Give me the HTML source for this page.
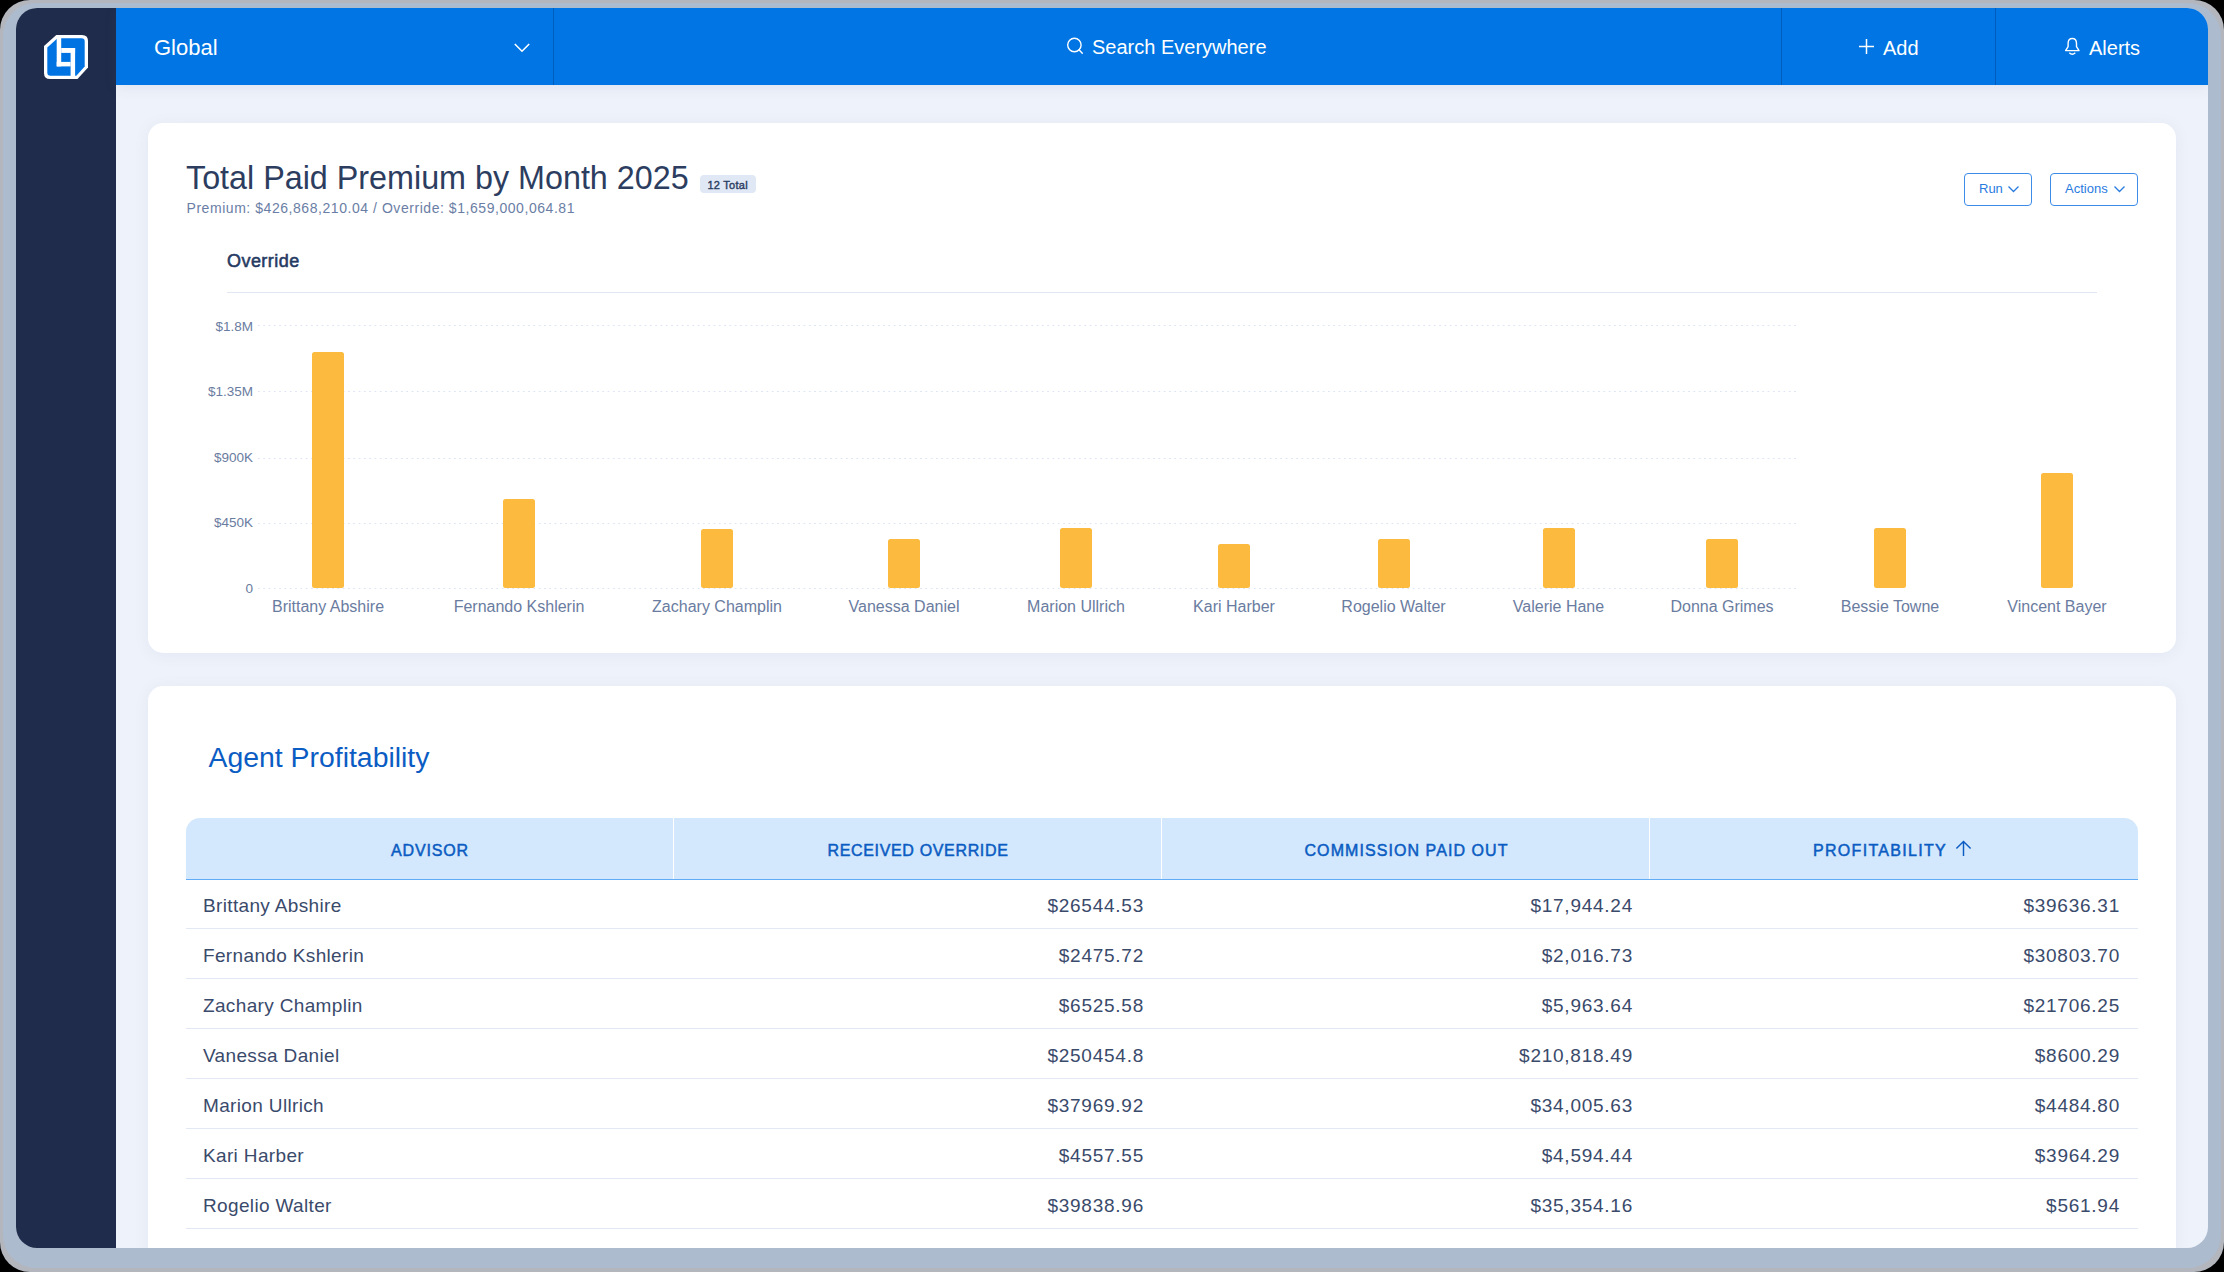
<!DOCTYPE html>
<html><head><meta charset="utf-8">
<style>
*{box-sizing:border-box;margin:0;padding:0}
html,body{width:2224px;height:1272px;overflow:hidden;background:#000}
body{position:relative;font-family:"Liberation Sans",sans-serif;color:#2f3e5c}
.abs{position:absolute}
#noise{position:absolute;left:0;top:0;width:2224px;height:1272px;border-radius:30px;background:#b3b6bd}
#frame{position:absolute;left:3px;top:3px;width:2218px;height:1264.5px;border-radius:33px;background:#adbbcf}
#screen{position:absolute;left:16px;top:8px;width:2192px;height:1240px;border-radius:21px;overflow:hidden;background:#eef2fa}
#pg{position:absolute;left:-16px;top:-8px;width:2224px;height:1272px}
#side{position:absolute;left:16px;top:8px;width:100px;height:1240px;background:#1f2c4b}
#head{position:absolute;left:116px;top:8px;width:2092px;height:77px;background:#0075e3;box-shadow:0 3px 12px rgba(90,120,170,.10)}
.sep{position:absolute;top:8px;width:1px;height:77px;background:#005cbd}
.ht{position:absolute;color:#fff;font-size:20px;line-height:20px;white-space:nowrap}
.card{position:absolute;background:#fff;border-radius:15px;box-shadow:0 2px 14px rgba(120,140,180,.10)}
.t{position:absolute;white-space:nowrap}
.grid{position:absolute;left:258px;width:1539px;height:1px;background-image:linear-gradient(90deg,#dce5f4 0,#dce5f4 2.1px,transparent 2.1px);background-size:5.3px 1px}
.yl{position:absolute;left:153px;width:100px;text-align:right;font-size:13.5px;line-height:13.5px;color:#6a7ca0;white-space:nowrap}
.bar{position:absolute;width:32px;background:#fcbb3f;border-radius:2.5px}
.xl{position:absolute;top:599.2px;width:200px;text-align:center;font-size:16px;line-height:16px;color:#6a7ca0;white-space:nowrap}
.btn{position:absolute;top:173px;height:33px;border:1.2px solid #3c8ce8;border-radius:4px;background:#fff}
.bt{position:absolute;top:181.5px;font-size:13px;line-height:13px;color:#2a7be0;white-space:nowrap}
.th{position:absolute;top:818px;height:61.5px;background:#d3e8fd}
.tht{position:absolute;top:843.4px;font-size:16px;line-height:16px;font-weight:400;-webkit-text-stroke:0.5px #0b5cc2;color:#0b5cc2;white-space:nowrap;text-align:center}
.rt{position:absolute;font-size:19px;line-height:19px;letter-spacing:0.35px;color:#3a4a6b;white-space:nowrap}
.rn{position:absolute;width:200px;text-align:right;font-size:19px;line-height:19px;letter-spacing:0.75px;color:#3a4a6b;white-space:nowrap}
.rsep{position:absolute;left:186px;width:1952px;height:1px;background:#e3e9f4}
</style></head>
<body>
<div id="noise"></div>
<div id="frame"></div>
<div id="screen"><div id="pg">
  <div id="side">
    <svg class="abs" style="left:28px;top:27px" width="44" height="44" viewBox="0 0 44 44">
      <path d="M12.3 0 H38 Q44 0 44 6 V32.5 L33.5 44 H6 Q0 44 0 38 V11 Z" fill="#fff"/>
      <path d="M13.5 3.3 H37.5 Q40.7 3.3 40.7 6.5 V31.5 L32.3 40.7 H6.5 Q3.3 40.7 3.3 37.5 V12.5 Z" fill="#0073e3"/>
      <rect x="12.7" y="3" width="4.5" height="28.4" fill="#fff"/>
      <rect x="12.7" y="26.9" width="13.9" height="4.5" fill="#fff"/>
      <rect x="17.2" y="13" width="13.9" height="4.9" fill="#fff"/>
      <rect x="26.6" y="13" width="4.5" height="28" fill="#fff"/>
    </svg>
  </div>
  <div id="head"></div>
  <div class="ht" style="left:154px;top:37px;font-size:22px;line-height:22px">Global</div>
  <svg class="abs" style="left:512.6px;top:41.6px" width="18" height="12" viewBox="0 0 18 12"><path d="M1.8 2 L9 9.2 L16.2 2" fill="none" stroke="#fff" stroke-width="1.6"/></svg>
  <div class="sep" style="left:553px"></div>
  <svg class="abs" style="left:1063px;top:35px" width="22" height="22" viewBox="0 0 22 22"><circle cx="11.4" cy="10" r="6.7" fill="none" stroke="#fff" stroke-width="1.4"/><path d="M16 14.8 L19.3 18.3" stroke="#fff" stroke-width="1.4" stroke-linecap="round"/></svg>
  <div class="ht" style="left:1092px;top:37.4px">Search Everywhere</div>
  <div class="sep" style="left:1781px"></div>
  <svg class="abs" style="left:1856px;top:36px" width="20" height="20" viewBox="0 0 20 20"><path d="M10.5 3 V18 M3 10.5 H18" stroke="#fff" stroke-width="1.5"/></svg>
  <div class="ht" style="left:1883px;top:37.8px">Add</div>
  <div class="sep" style="left:1995px"></div>
  <svg class="abs" style="left:2062px;top:36px" width="20" height="22" viewBox="0 0 20 22"><path d="M3.6 14.6 L6.1 10.6 V7.4 Q6.1 2.45 10.3 2.45 Q14.5 2.45 14.5 7.4 V10.6 L17 14.6 Z" fill="none" stroke="#fff" stroke-width="1.4" stroke-linejoin="round"/><path d="M7.3 16.8 Q10.3 19.6 13.3 16.8" fill="none" stroke="#fff" stroke-width="1.4"/></svg>
  <div class="ht" style="left:2089px;top:37.8px">Alerts</div>

  <!-- chart card -->
  <div class="card" style="left:148px;top:123px;width:2028px;height:530px"></div>
  <div class="t" style="left:186px;top:162.2px;font-size:32.3px;line-height:32.3px;color:#2c3d60">Total Paid Premium by Month 2025</div>
  <div class="abs" style="left:700px;top:175px;width:56px;height:18px;border-radius:4px;background:#e1e8f5"></div>
  <div class="t" style="left:707.5px;top:179.8px;font-size:11px;line-height:11px;letter-spacing:0.25px;-webkit-text-stroke:0.4px #2b3d63;color:#2b3d63">12 Total</div>
  <div class="t" style="left:186.5px;top:200.85px;font-size:14px;line-height:14px;letter-spacing:0.55px;color:#6a7ea5">Premium: $426,868,210.04 / Override: $1,659,000,064.81</div>
  <div class="btn" style="left:1964px;width:68px"></div>
  <div class="bt" style="left:1979px">Run</div>
  <svg class="abs" style="left:2007px;top:185px" width="13" height="9" viewBox="0 0 13 9"><path d="M1.5 1.5 L6.5 6.5 L11.5 1.5" fill="none" stroke="#2a7be0" stroke-width="1.3"/></svg>
  <div class="btn" style="left:2050px;width:88px"></div>
  <div class="bt" style="left:2065px">Actions</div>
  <svg class="abs" style="left:2113px;top:185px" width="13" height="9" viewBox="0 0 13 9"><path d="M1.5 1.5 L6.5 6.5 L11.5 1.5" fill="none" stroke="#2a7be0" stroke-width="1.3"/></svg>
  <div class="t" style="left:227px;top:252.2px;font-size:18px;line-height:18px;font-weight:400;-webkit-text-stroke:0.55px #253a62;letter-spacing:0.45px;color:#253a62">Override</div>
  <div class="abs" style="left:227px;top:292px;width:1870px;height:1px;background:#e0e7f3"></div>
<div class="grid" style="top:325px"></div>
<div class="yl" style="top:319.6px">$1.8M</div>
<div class="grid" style="top:391px"></div>
<div class="yl" style="top:385.2px">$1.35M</div>
<div class="grid" style="top:458px"></div>
<div class="yl" style="top:450.8px">$900K</div>
<div class="grid" style="top:523px"></div>
<div class="yl" style="top:516.4px">$450K</div>
<div class="grid" style="top:588px"></div>
<div class="yl" style="top:582.0px">0</div>
<div class="bar" style="left:312px;top:352px;height:236px"></div>
<div class="xl" style="left:228px">Brittany Abshire</div>
<div class="bar" style="left:503px;top:499px;height:89px"></div>
<div class="xl" style="left:419px">Fernando Kshlerin</div>
<div class="bar" style="left:701px;top:528.5px;height:59.5px"></div>
<div class="xl" style="left:617px">Zachary Champlin</div>
<div class="bar" style="left:888px;top:539px;height:49px"></div>
<div class="xl" style="left:804px">Vanessa Daniel</div>
<div class="bar" style="left:1060px;top:528px;height:60px"></div>
<div class="xl" style="left:976px">Marion Ullrich</div>
<div class="bar" style="left:1218px;top:544px;height:44px"></div>
<div class="xl" style="left:1134px">Kari Harber</div>
<div class="bar" style="left:1377.5px;top:539px;height:49px"></div>
<div class="xl" style="left:1293.5px">Rogelio Walter</div>
<div class="bar" style="left:1542.5px;top:528.3px;height:59.700000000000045px"></div>
<div class="xl" style="left:1458.5px">Valerie Hane</div>
<div class="bar" style="left:1706px;top:539px;height:49px"></div>
<div class="xl" style="left:1622px">Donna Grimes</div>
<div class="bar" style="left:1874px;top:528.3px;height:59.700000000000045px"></div>
<div class="xl" style="left:1790px">Bessie Towne</div>
<div class="bar" style="left:2041px;top:472.5px;height:115.5px"></div>
<div class="xl" style="left:1957px">Vincent Bayer</div>

  <!-- table card -->
  <div class="card" style="left:148px;top:686px;width:2028px;height:700px"></div>
  <div class="t" style="left:208.5px;top:743.4px;font-size:28.4px;line-height:28.4px;color:#0b5cc3">Agent Profitability</div>
  <div class="th" style="left:186px;width:1952px;border-radius:14px 14px 0 0;border-bottom:1.5px solid #62abf7"></div>
  <div class="abs" style="left:673px;top:818px;width:1px;height:61px;background:#fff"></div>
  <div class="abs" style="left:1161px;top:818px;width:1px;height:61px;background:#fff"></div>
  <div class="abs" style="left:1649px;top:818px;width:1px;height:61px;background:#fff"></div>
  <div class="tht" style="left:330px;width:200px;letter-spacing:0.86px">ADVISOR</div>
  <div class="tht" style="left:818px;width:200px;letter-spacing:0.66px">RECEIVED OVERRIDE</div>
  <div class="tht" style="left:1304.5px;width:200px;letter-spacing:1.07px">COMMISSION PAID OUT</div>
  <div class="tht" style="left:1795px;width:170px;letter-spacing:1.3px">PROFITABILITY</div>
  <svg class="abs" style="left:1953px;top:839px" width="20" height="20" viewBox="0 0 20 20"><path d="M10.5 17 V3 M3.4 9.6 L10.5 2.6 L17.6 9.6" fill="none" stroke="#0b5cc2" stroke-width="1.45"/></svg>

<div class="rt" style="left:203px;top:896px">Brittany Abshire</div>
<div class="rn" style="left:944px;top:896px">$26544.53</div>
<div class="rn" style="left:1433px;top:896px">$17,944.24</div>
<div class="rn" style="left:1920px;top:896px">$39636.31</div>
<div class="rsep" style="top:928px"></div>
<div class="rt" style="left:203px;top:946px">Fernando Kshlerin</div>
<div class="rn" style="left:944px;top:946px">$2475.72</div>
<div class="rn" style="left:1433px;top:946px">$2,016.73</div>
<div class="rn" style="left:1920px;top:946px">$30803.70</div>
<div class="rsep" style="top:978px"></div>
<div class="rt" style="left:203px;top:996px">Zachary Champlin</div>
<div class="rn" style="left:944px;top:996px">$6525.58</div>
<div class="rn" style="left:1433px;top:996px">$5,963.64</div>
<div class="rn" style="left:1920px;top:996px">$21706.25</div>
<div class="rsep" style="top:1028px"></div>
<div class="rt" style="left:203px;top:1046px">Vanessa Daniel</div>
<div class="rn" style="left:944px;top:1046px">$250454.8</div>
<div class="rn" style="left:1433px;top:1046px">$210,818.49</div>
<div class="rn" style="left:1920px;top:1046px">$8600.29</div>
<div class="rsep" style="top:1078px"></div>
<div class="rt" style="left:203px;top:1096px">Marion Ullrich</div>
<div class="rn" style="left:944px;top:1096px">$37969.92</div>
<div class="rn" style="left:1433px;top:1096px">$34,005.63</div>
<div class="rn" style="left:1920px;top:1096px">$4484.80</div>
<div class="rsep" style="top:1128px"></div>
<div class="rt" style="left:203px;top:1146px">Kari Harber</div>
<div class="rn" style="left:944px;top:1146px">$4557.55</div>
<div class="rn" style="left:1433px;top:1146px">$4,594.44</div>
<div class="rn" style="left:1920px;top:1146px">$3964.29</div>
<div class="rsep" style="top:1178px"></div>
<div class="rt" style="left:203px;top:1196px">Rogelio Walter</div>
<div class="rn" style="left:944px;top:1196px">$39838.96</div>
<div class="rn" style="left:1433px;top:1196px">$35,354.16</div>
<div class="rn" style="left:1920px;top:1196px">$561.94</div>
<div class="rsep" style="top:1228px"></div>
<div class="rt" style="left:203px;top:1244.6px">Valerie Hane</div>
<div class="rn" style="left:944px;top:1244.6px">$8.25</div>
<div class="rn" style="left:1433px;top:1244.6px">$9,802.5</div>
<div class="rn" style="left:1920px;top:1244.6px">$302.14</div>
<div class="rsep" style="top:1278px"></div>
</div></div>
</body></html>
